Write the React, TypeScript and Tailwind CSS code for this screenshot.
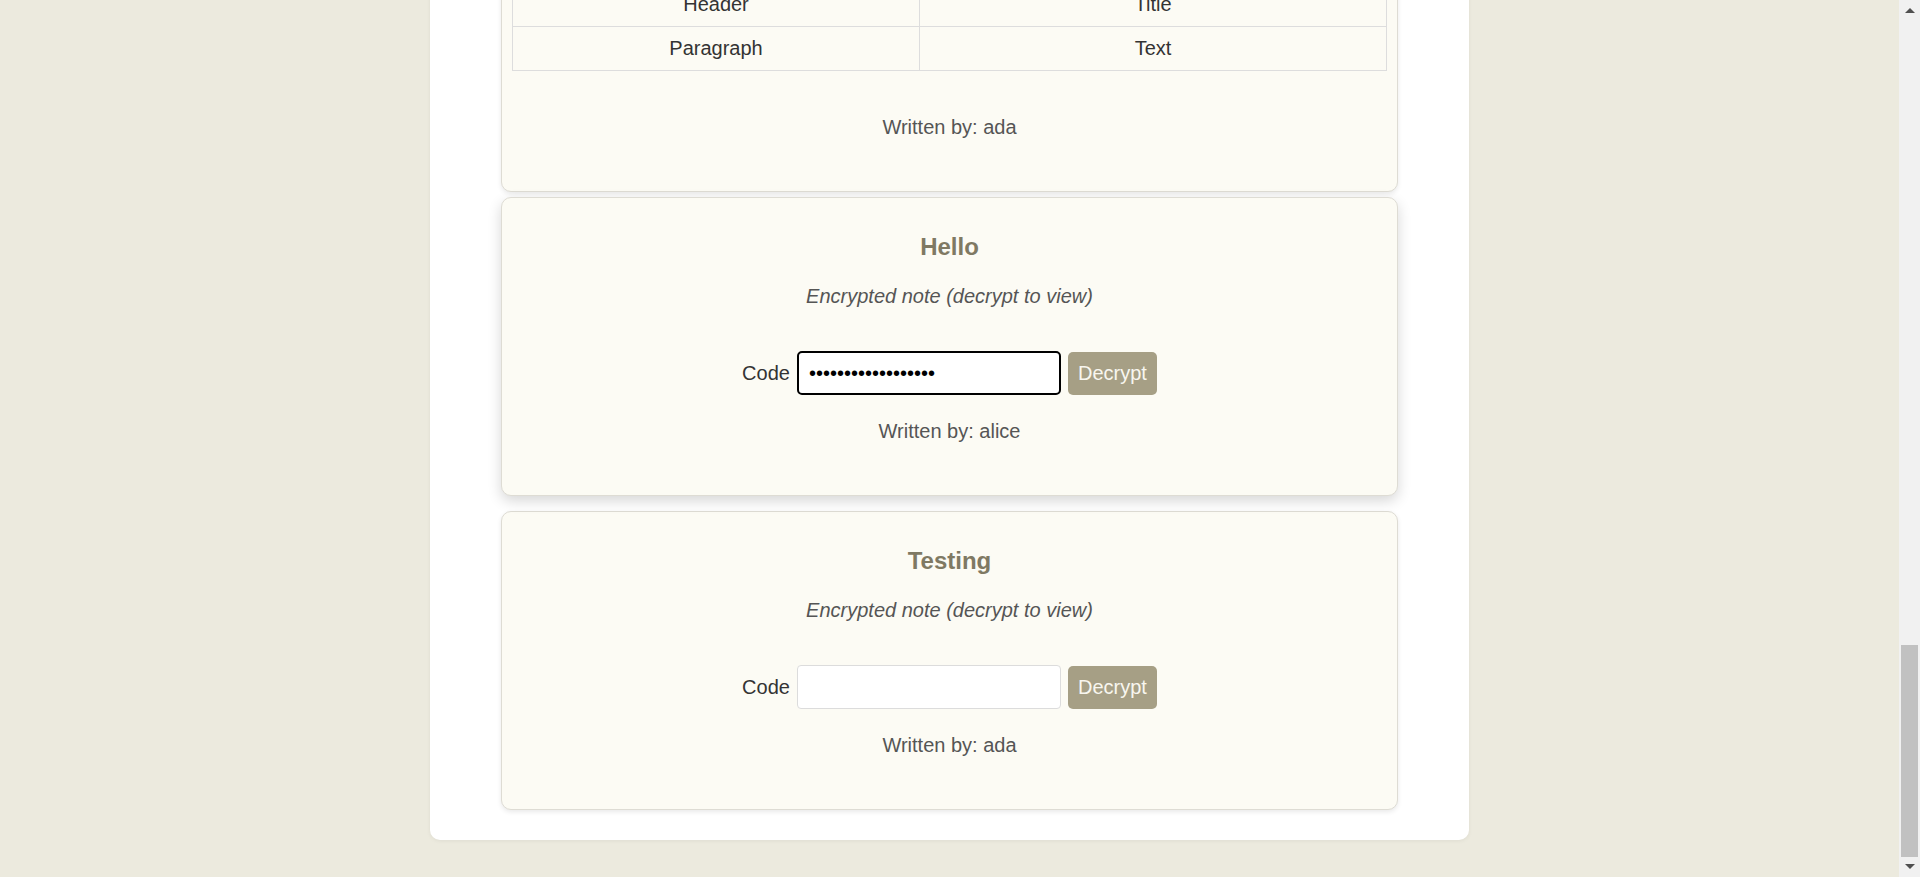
import React from "react";

const font = { fontFamily: '"Liberation Sans", Arial, sans-serif' };

function NoteCard({
  title,
  author,
  focused,
  value,
  lifted,
}: {
  title: string;
  author: string;
  focused?: boolean;
  value?: string;
  lifted?: boolean;
}) {
  return (
    <div
      className={
        "shrink-0 flex flex-col items-center rounded-[10px] border border-[#dedcd4] bg-[#fcfbf4] px-[10px] pt-[35px] pb-[52px] " +
        (lifted
          ? "-translate-y-[5px] shadow-[0_5px_14px_rgba(0,0,0,0.16)]"
          : "shadow-[0_2px_5px_rgba(0,0,0,0.09)]")
      }
    >
      <h3 className="text-[24px] leading-[28px] font-bold text-[#7f7963]">{title}</h3>
      <p className="mt-[24px] text-[20px] leading-[23px] italic text-[#555]">
        Encrypted note (decrypt to view)
      </p>
      <div className="mt-[43px] flex h-[44px] items-center gap-[7px]">
        <span className="text-[20px] leading-[23px] text-[#333]">Code</span>
        <input
          type="password"
          readOnly
          defaultValue={value}
          style={font}
          className={
            "h-[44px] w-[264px] bg-white pl-[10px] text-[20px] text-black outline-none " +
            (focused
              ? "rounded-[5px] border-2 border-black"
              : "rounded-[4px] border border-[#dcdcdc]")
          }
        />
        <button
          style={font}
          className="h-[43px] w-[89px] rounded-[5px] bg-[#a69f85] text-[20px] text-[#f8f6ef]"
        >
          Decrypt
        </button>
      </div>
      <p className="mt-[25px] text-[20px] leading-[23px] text-[#555]">Written by: {author}</p>
    </div>
  );
}

function TableCard() {
  const rows = [
    ["Element", "Usage"],
    ["Bold", "Strong"],
    ["Header", "Title"],
    ["Paragraph", "Text"],
  ];
  return (
    <div className="shrink-0 flex flex-col items-center rounded-[10px] border border-[#dedcd4] bg-[#fcfbf4] px-[10px] pt-[35px] pb-[52px] shadow-[0_2px_5px_rgba(0,0,0,0.09)]">
      <h3 className="text-[24px] leading-[28px] font-bold text-[#7f7963]">Markdown table</h3>
      <p className="mt-[24px] mb-[24px] text-[20px] leading-[23px] text-[#333]">
        A quick test of how tables are displayed.
      </p>
      <table className="w-full border-collapse text-[20px] text-[#333]">
        <tbody>
          {rows.map((r) => (
            <tr key={r[0]}>
              <td className="h-[44px] w-[407px] border border-[#dddddd] p-0 text-center leading-[23px]">
                {r[0]}
              </td>
              <td className="h-[44px] border border-[#dddddd] p-0 text-center leading-[23px]">{r[1]}</td>
            </tr>
          ))}
        </tbody>
      </table>
      <p className="mt-[45px] text-[20px] leading-[23px] text-[#555]">Written by: ada</p>
    </div>
  );
}

function Scrollbar() {
  return (
    <div className="flex h-screen w-[21px] shrink-0 flex-col bg-[#f1f1f1]">
      <div className="flex h-[21px] items-center justify-center">
        <svg width="10" height="6" viewBox="0 0 10 6">
          <polygon points="5,0 10,5 0,5" fill="#505050" />
        </svg>
      </div>
      <div className="flex flex-1 flex-col justify-end px-[2px]">
        <div className="h-[212px] bg-[#c1c1c1]" />
      </div>
      <div className="flex h-[20px] items-center justify-center">
        <svg width="10" height="6" viewBox="0 0 10 6">
          <polygon points="0,0 10,0 5,5" fill="#505050" />
        </svg>
      </div>
    </div>
  );
}

export default function App() {
  return (
    <div className="flex h-screen w-full overflow-hidden bg-[#eceade]" style={font}>
      <div className="flex min-w-0 flex-1 flex-col items-center justify-end overflow-hidden pb-[37px]">
        <div className="flex w-[1039px] shrink-0 flex-col gap-[10px] rounded-[10px] bg-white px-[71px] pt-[30px] pb-[30px] shadow-[0_1px_4px_rgba(0,0,0,0.06)]">
          <TableCard />
          <NoteCard title="Hello" author="alice" focused value="abcdefghijklmnopqr" lifted />
          <NoteCard title="Testing" author="ada" />
        </div>
      </div>
      <Scrollbar />
    </div>
  );
}
